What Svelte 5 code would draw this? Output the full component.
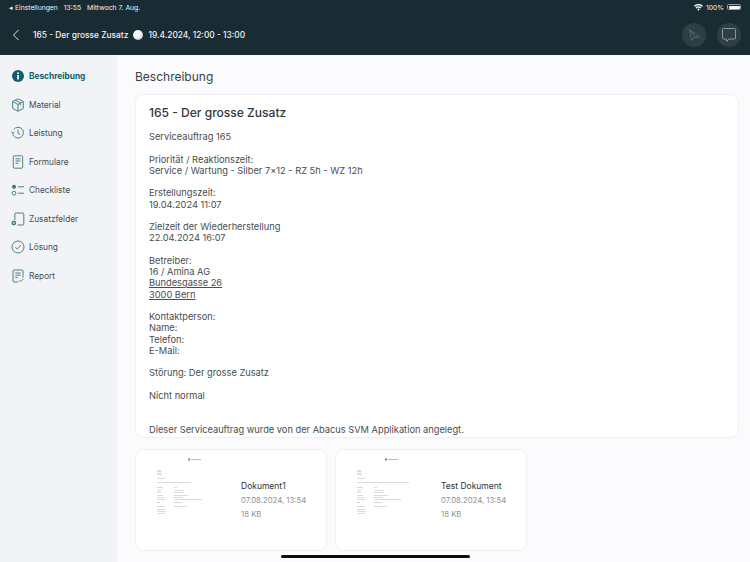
<script>
  const nav = [
    { id: "info", label: "Beschreibung", active: true },
    { id: "box", label: "Material" },
    { id: "history", label: "Leistung" },
    { id: "form", label: "Formulare" },
    { id: "check", label: "Checkliste" },
    { id: "extra", label: "Zusatzfelder" },
    { id: "solve", label: "Lösung" },
    { id: "report", label: "Report" },
  ];

  const blocks = [
    ["Serviceauftrag 165"],
    ["Priorität / Reaktionszeit:", "Service / Wartung - Silber 7×12 - RZ 5h - WZ 12h"],
    ["Erstellungszeit:", "19.04.2024 11:07"],
    ["Zielzeit der Wiederherstellung", "22.04.2024 16:07"],
  ];

  const contact = ["Kontaktperson:", "Name:", "Telefon:", "E-Mail:"];

  const docs = [
    { name: "Dokument1", date: "07.08.2024, 13:54", size: "18 KB", logoX: 31, wide: 34, long: 28 },
    { name: "Test Dokument", date: "07.08.2024, 13:54", size: "18 KB", logoX: 28, wide: 52, long: 27 },
  ];
</script>

<div class="screen">
  <header class="top">
    <div class="status">
      <div class="status-left">
        <span>◂ Einstellungen</span>
        <span>13:55</span>
        <span>Mittwoch 7. Aug.</span>
      </div>
      <div class="status-right">
        <svg width="9" height="7" viewBox="0 0 18 14">
          <path d="M9 13.500 6.400 10.600a3.600 3.600 0 0 1 5.200 0z" fill="#fff" />
          <path d="M4.800 8.900 3.100 7a8.300 8.300 0 0 1 11.800 0l-1.700 1.900a5.900 5.900 0 0 0-8.400 0z" fill="#fff" />
          <path d="M1.700 5.500 0 3.700a12.700 12.700 0 0 1 18 0l-1.700 1.800a10.300 10.300 0 0 0-14.600 0z" fill="#fff" />
        </svg>
        <span>100%</span>
        <span class="battery"><span class="battery-fill"></span></span>
      </div>
    </div>
    <div class="titlebar">
      <div class="title-left">
        <svg class="back" width="8" height="12" viewBox="0 0 8 12">
          <path d="M6.500 1 1.500 6l5 5" fill="none" stroke="#dfe4e6" stroke-width="1" />
        </svg>
        <span>165 - Der grosse Zusatz</span>
        <span class="clock"></span>
        <span>19.4.2024, 12:00 - 13:00</span>
      </div>
      <div class="actions">
        <button class="round" aria-label="Senden">
          <svg width="16" height="16" viewBox="0 0 16 16">
            <path d="M3.500 2.500 13.500 10 9 10.300 5.500 13.500z M9 10.300 3.500 2.500" fill="none" stroke="#56666b" stroke-width="1" stroke-linejoin="round" />
          </svg>
        </button>
        <button class="round" aria-label="Nachricht">
          <svg width="16" height="16" viewBox="0 0 16 16">
            <path d="M2.500 1.500h11a1 1 0 0 1 1 1v8.500a1 1 0 0 1-1 1H8l-2.500 2.500V12h-3a1 1 0 0 1-1-1V2.500a1 1 0 0 1 1-1z" fill="none" stroke="#8a989c" stroke-width="1" stroke-linejoin="round" />
          </svg>
        </button>
      </div>
    </div>
  </header>

  <div class="body">
    <nav class="side">
      {#each nav as item}
        <div class="nav-item" class:active={item.active}>
          <svg class="nav-icon" width="14" height="14" viewBox="0 0 14 14" fill="none" stroke="#3a7680" stroke-width="0.9">
            {#if item.id === "info"}
              <circle cx="7" cy="7" r="6" fill="#0f5f6b" stroke="none" />
              <rect x="6.200" y="6" width="1.700" height="4.500" fill="#fff" stroke="none" />
              <rect x="6.200" y="3.400" width="1.700" height="1.600" fill="#fff" stroke="none" />
            {:else if item.id === "box"}
              <path d="M7 .8 12.300 3.500v7L7 13.200 1.700 10.500v-7z M1.700 3.500 7 6.500l5.300-3 M7 6.500v6.700 M4.300 2.200l5.300 2.900v2.200" stroke-linejoin="round" />
            {:else if item.id === "history"}
              <path d="M2.600 3.600A5.400 5.400 0 1 1 1.700 7.400" />
              <path d="M.4 5.600 1.800 7.300l1.700-1.400" />
              <path d="M7 4v3.400l2.200 1.300" />
            {:else if item.id === "form"}
              <rect x="2.300" y=".8" width="9.400" height="12.400" rx="1" />
              <path d="M4.500 3.800h5 M4.500 6h5 M4.500 8.200h3" />
            {:else if item.id === "check"}
              <circle cx="3" cy="3.800" r="2" fill="#3a7680" stroke="none" />
              <circle cx="3" cy="10.200" r="1.900" />
              <path d="M7 3.800h6 M7 10.200h6" />
            {:else if item.id === "extra"}
              <path d="M3.800 8V2a1 1 0 0 1 1-1h7a1 1 0 0 1 1 1v10a1 1 0 0 1-1 1H6.500" />
              <circle cx="2.800" cy="11" r="2.300" fill="#2f6f78" stroke="none" />
              <path d="M1.700 11h2.200 M2.800 9.900v2.200" stroke="#fff" stroke-width=".7" />
            {:else if item.id === "solve"}
              <circle cx="7" cy="7" r="6" />
              <path d="M4.400 7.200 6.300 9.100 9.800 5.100" />
            {:else}
              <path d="M7 13H3a1 1 0 0 1-1-1V2a1 1 0 0 1 1-1h8a1 1 0 0 1 1 1v6.500" />
              <path d="M4.300 4h5.400 M4.300 6.200h5.400 M4.300 8.400h2.600" />
              <path d="M8 11.200l1.500 1.500 3-3" />
            {/if}
          </svg>
          <span>{item.label}</span>
        </div>
      {/each}
    </nav>

    <main class="main">
      <h1>Beschreibung</h1>
      <section class="card">
        <h2>165 - Der grosse Zusatz</h2>
        <div class="text">
          {#each blocks as block}
            <p>
              {#each block as line}{line}<br />{/each}
            </p>
          {/each}
          <p>Betreiber:<br />16 / Amina AG<br /><u>Bundesgasse 26</u><br /><u>3000 Bern</u></p>
          <p>
            {#each contact as line}{line}<br />{/each}
          </p>
          <p>Störung: Der grosse Zusatz</p>
          <p>Nicht normal</p>
          <p class="gap">Dieser Serviceauftrag wurde von der Abacus SVM Applikation angelegt.</p>
        </div>
      </section>

      <div class="docs">
        {#each docs as doc}
          <article class="doc">
            <svg class="thumb" width="56" height="60" viewBox="0 0 56 60">
              <rect x={doc.logoX} y="1.500" width="2" height="2" fill="#d2677a" />
              <rect x={doc.logoX + 3} y="2" width="10" height="1" fill="#bbb" />
              <g fill="#c4c4c4">
                <rect x="0" y="13" width="4" height=".6" />
                <rect x="0" y="14.500" width="5" height=".6" />
                <rect x="0" y="16" width="4" height=".6" />
                <rect x="0" y="17.500" width="5" height=".6" />
                <rect x="0" y="21" width="8" height=".6" />
                <rect x="0" y="25" width={doc.wide} height=".6" />
                <rect x="0" y="30" width="6" height=".6" />
                <rect x="17" y="30" width="3" height=".6" />
                <rect x="0" y="33" width="4" height=".6" />
                <rect x="17" y="33" width="10" height=".6" />
                <rect x="0" y="35" width="4" height=".6" />
                <rect x="17" y="35" width="10" height=".6" />
                <rect x="0" y="38" width="6" height=".6" />
                <rect x="17" y="38" width="14" height=".6" />
                <rect x="0" y="40" width="7" height=".6" />
                <rect x="17" y="40" width="9" height=".6" />
                <rect x="0" y="42" width="8" height=".6" />
                <rect x="17" y="42" width={doc.long} height=".6" />
                <rect x="0" y="45" width="3" height=".6" />
                <rect x="17" y="45" width="8" height=".6" />
                <rect x="0" y="49" width="8" height=".6" />
                <rect x="17" y="49" width="13" height=".6" />
                <rect x="0" y="52" width="8" height=".6" />
                <rect x="0" y="54" width="9" height=".6" />
                <rect x="0" y="56" width="8" height=".6" />
              </g>
            </svg>
            <div class="doc-info">
              <div class="doc-name">{doc.name}</div>
              <div class="doc-meta">{doc.date}</div>
              <div class="doc-meta">{doc.size}</div>
            </div>
          </article>
        {/each}
      </div>
    </main>
  </div>

  <div class="home"></div>
</div>

<style>
  :global(body) {
    margin: 0;
    background: #fbfbfd;
  }

  .screen {
    width: 750px;
    height: 562px;
    position: relative;
    overflow: hidden;
    display: flex;
    flex-direction: column;
    font-family: Inter, "Liberation Sans", sans-serif;
    color: #2b2f31;
  }

  .top {
    height: 55px;
    background: #1a2c33;
    color: #f0f3f4;
    flex: none;
  }

  .status {
    display: flex;
    justify-content: space-between;
    align-items: center;
    height: 14px;
    padding: 0 9px;
    font-size: 6.800px;
  }
  .status-left {
    display: flex;
    gap: 6px;
  }
  .status-right {
    display: flex;
    align-items: center;
    gap: 3px;
  }
  .battery {
    width: 14px;
    height: 6px;
    border: 0.5px solid #9aa5a8;
    border-radius: 1.500px;
    padding: 0.5px;
    box-sizing: border-box;
    display: flex;
  }
  .battery-fill {
    flex: 1;
    background: #fff;
    border-radius: 1px;
  }

  .titlebar {
    height: 41px;
    display: flex;
    justify-content: space-between;
    align-items: center;
    padding: 0 9px 0 12px;
    box-sizing: border-box;
  }
  .title-left {
    display: flex;
    align-items: center;
    font-size: 8.400px;
    font-weight: 500;
  }
  .back {
    margin-right: 13px;
  }
  .clock {
    width: 10px;
    height: 10px;
    margin: 0 5px;
    border-radius: 50%;
    background: radial-gradient(circle at 40% 40%, #f4f5f5 40%, #aab0b3 100%);
  }
  .actions {
    display: flex;
    gap: 11px;
  }
  .round {
    width: 24px;
    height: 24px;
    padding: 0;
    border: none;
    border-radius: 50%;
    background: #2d3e45;
    display: flex;
    align-items: center;
    justify-content: center;
  }

  .body {
    flex: 1;
    display: flex;
    min-height: 0;
  }

  .side {
    width: 117px;
    flex: none;
    background: #f1f3f6;
    padding-top: 7px;
    box-sizing: border-box;
  }
  .nav-item {
    height: 28.500px;
    display: flex;
    align-items: center;
    gap: 4px;
    padding-left: 11px;
    font-size: 8.300px;
    color: #434f54;
  }
  .nav-item.active {
    color: #0f5f6b;
    font-weight: 700;
  }
  .nav-icon {
    flex: none;
  }

  .main {
    flex: 1;
    min-width: 0;
    padding: 0 11px 0 18px;
  }
  h1 {
    margin: 0;
    font-size: 12px;
    font-weight: 400;
    line-height: 15px;
    padding: 14px 0 10px;
    color: #3a3f41;
  }
  .card {
    height: 344px;
    box-sizing: border-box;
    background: #fff;
    border: 1px solid #eef0f3;
    border-radius: 9px;
    padding: 10px 13px 0;
    overflow: hidden;
  }
  h2 {
    margin: 0 0 10px;
    font-size: 12.050px;
    font-weight: 500;
    line-height: 16px;
    color: #33373a;
  }
  .text {
    font-size: 9.280px;
    line-height: 11.260px;
    color: #484d4f;
  }
  .text p {
    margin: 0 0 11.260px;
  }
  .text p.gap {
    margin-top: 22.520px;
  }

  .docs {
    display: flex;
    gap: 8px;
    margin-top: 11px;
  }
  .doc {
    width: 192px;
    height: 102px;
    box-sizing: border-box;
    background: #fff;
    border: 1px solid #eef0f3;
    border-radius: 9px;
    display: flex;
    align-items: flex-start;
    overflow: hidden;
  }
  .thumb {
    margin: 7px 0 0 21px;
    flex: none;
  }
  .doc-info {
    margin: 29px 0 0 28px;
  }
  .doc-name {
    font-size: 8.500px;
    line-height: 14px;
    color: #2f3335;
  }
  .doc-meta {
    font-size: 7.750px;
    line-height: 14px;
    color: #8e9193;
  }

  .home {
    position: absolute;
    left: 281px;
    bottom: 4px;
    width: 189px;
    height: 3px;
    border-radius: 2px;
    background: #0c0c0c;
  }
</style>
